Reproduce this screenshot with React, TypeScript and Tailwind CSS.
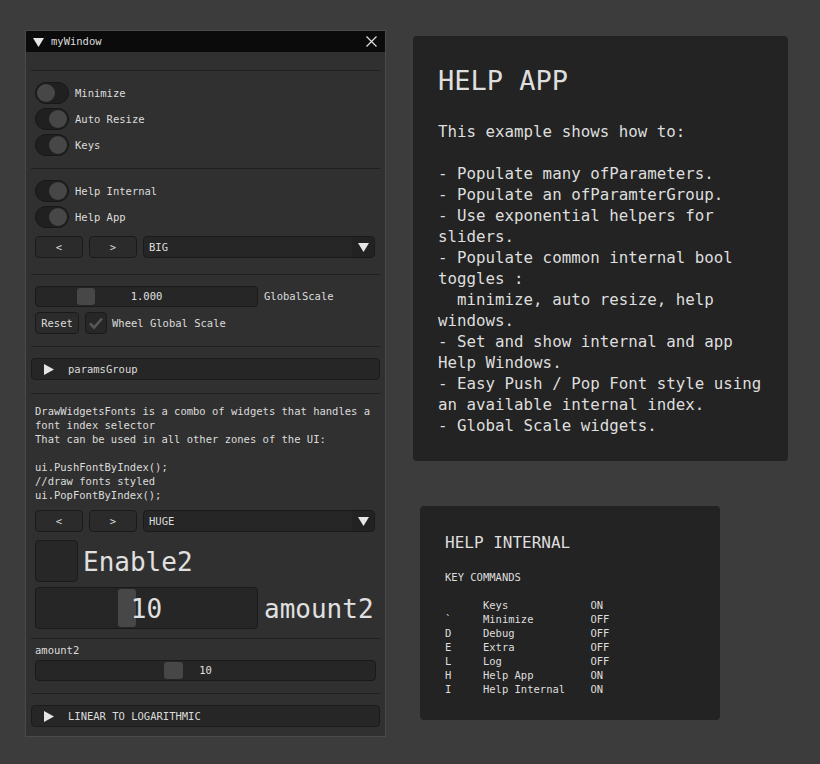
import React from "react";

const mono = { fontFamily: '"DejaVu Sans Mono", "Liberation Mono", monospace' };

function Sep() {
  return <div className="h-px bg-[#202020]" />;
}

function Toggle({ on, label, first }: { on: boolean; label: string; first?: boolean }) {
  return (
    <div className={`flex h-[22px] items-center gap-[6px] ${first ? "" : "mt-[4px]"}`}>
      <div
        className={`flex h-[22px] w-[34px] items-center rounded-full border border-[#171717] bg-[#202020] px-[1px] ${
          on ? "justify-end" : "justify-start"
        }`}
      >
        <div className="h-[18px] w-[18px] rounded-full bg-[#474747]" />
      </div>
      <span className="pt-[2px] text-[10.5px] text-[#dcdcdc]">{label}</span>
    </div>
  );
}

function DownTri({ className }: { className?: string }) {
  return (
    <svg width="11" height="10" viewBox="0 0 11 10" className={className}>
      <polygon points="0,1 11,1 5.5,10" fill="#e6e6e6" />
    </svg>
  );
}

function RightTri() {
  return (
    <svg width="10" height="11" viewBox="0 0 10 11">
      <polygon points="0,0 10,5.5 0,11" fill="#e6e6e6" />
    </svg>
  );
}

function NavRow({ value, className }: { value: string; className?: string }) {
  return (
    <div className={`flex h-[22px] items-stretch ${className ?? ""}`}>
      <div className="flex w-[48px] items-center justify-center rounded-[4px] border border-[#1a1a1a] bg-[#2b2b2b] pt-[1px] text-[10.5px] text-[#dcdcdc]">
        &lt;
      </div>
      <div className="ml-[6px] flex w-[48px] items-center justify-center rounded-[4px] border border-[#1a1a1a] bg-[#2b2b2b] pt-[1px] text-[10.5px] text-[#dcdcdc]">
        &gt;
      </div>
      <div className="ml-[6px] flex w-[232px] items-stretch overflow-hidden rounded-[4px] border border-[#1a1a1a] bg-[#262626]">
        <div className="flex flex-1 items-center pl-[5px] pt-[1px] text-[10.5px] text-[#dcdcdc]">{value}</div>
        <div className="flex w-[22px] items-center justify-center bg-[#222222]">
          <DownTri />
        </div>
      </div>
    </div>
  );
}

function Header({ label, className }: { label: string; className?: string }) {
  return (
    <div
      className={`flex h-[22px] items-center rounded-[4px] border border-[#1b1b1b] bg-[#262626] pl-[12px] ${className ?? ""}`}
    >
      <RightTri />
      <span className="ml-[14px] pt-[1px] text-[10.5px] text-[#dcdcdc]">{label}</span>
    </div>
  );
}

function Slider({
  width,
  height,
  grabLeft,
  grabWidth,
  value,
  big,
}: {
  width: number;
  height: number;
  grabLeft: number;
  grabWidth: number;
  value: string;
  big?: boolean;
}) {
  return (
    <div
      className="relative flex items-center justify-center rounded-[4px] border border-[#1a1a1a] bg-[#262626]"
      style={{ width, height }}
    >
      <div
        className="absolute rounded-[3px] bg-[#474747]"
        style={{ left: grabLeft, width: grabWidth, top: 1, bottom: 1 }}
      />
      <span className={`relative ${big ? "pt-[3px] text-[26px]" : "pt-[1px] text-[10.5px]"} text-[#e0e0e0]`}>
        {value}
      </span>
    </div>
  );
}

const helpAppLines = [
  "This example shows how to:",
  "",
  "- Populate many ofParameters.",
  "- Populate an ofParamterGroup.",
  "- Use exponential helpers for",
  "sliders.",
  "- Populate common internal bool",
  "toggles :",
  "  minimize, auto resize, help",
  "windows.",
  "- Set and show internal and app",
  "Help Windows.",
  "- Easy Push / Pop Font style using",
  "an available internal index.",
  "- Global Scale widgets.",
];

const internalLines = [
  "      Keys             ON",
  "`     Minimize         OFF",
  "D     Debug            OFF",
  "E     Extra            OFF",
  "L     Log              OFF",
  "H     Help App         ON",
  "I     Help Internal    ON",
];

export default function App() {
  return (
    <div className="flex min-h-[764px] w-[820px] items-start bg-[#3c3c3c]" style={mono}>
      {/* Window */}
      <div className="ml-[25px] mt-[30px] w-[361px] border border-[#4a4a4a] bg-[#303030]">
        <div className="flex h-[21px] items-center bg-[#0b0b0b] pl-[7px] pr-[8px]">
          <DownTri />
          <span className="ml-[7px] pt-[1px] text-[10.5px] text-[#dcdcdc]">myWindow</span>
          <svg width="11" height="11" viewBox="0 0 11 11" className="ml-auto">
            <path d="M0.5 0.5 L10.5 10.5 M10.5 0.5 L0.5 10.5" stroke="#e0e0e0" strokeWidth="1.2" />
          </svg>
        </div>
        <div className="flex flex-col px-[5px] pb-[9px]">
          <div className="mt-[18px]">
            <Sep />
          </div>
          <div className="mt-[11px] flex flex-col px-[4px]">
            <Toggle on={false} label="Minimize" first />
            <Toggle on label="Auto Resize" />
            <Toggle on label="Keys" />
          </div>
          <div className="mt-[12px]">
            <Sep />
          </div>
          <div className="mt-[11px] flex flex-col px-[4px]">
            <Toggle on label="Help Internal" first />
            <Toggle on label="Help App" />
            <NavRow value="BIG" className="mt-[8px]" />
          </div>
          <div className="mt-[16px]">
            <Sep />
          </div>
          <div className="mt-[11px] flex flex-col px-[4px]">
            <div className="flex items-center gap-[6px]">
              <Slider width={223} height={21} grabLeft={41} grabWidth={18} value="1.000" />
              <span className="pt-[1px] text-[10.5px] text-[#dcdcdc]">GlobalScale</span>
            </div>
            <div className="mt-[5px] flex h-[22px] items-center">
              <div className="flex h-[22px] w-[44px] items-center justify-center rounded-[4px] border border-[#1a1a1a] bg-[#2b2b2b] pt-[1px] text-[10.5px] text-[#dcdcdc]">
                Reset
              </div>
              <div className="ml-[6px] flex h-[22px] w-[22px] items-center justify-center rounded-[4px] border border-[#1a1a1a] bg-[#272727]">
                <svg width="16" height="14" viewBox="0 0 16 14">
                  <path d="M2 7.5 L6 11.5 L14 2.5" stroke="#575757" strokeWidth="2.6" fill="none" />
                </svg>
              </div>
              <span className="ml-[5px] pt-[1px] text-[10.5px] text-[#dcdcdc]">Wheel Global Scale</span>
            </div>
          </div>
          <div className="mt-[12px]">
            <Sep />
          </div>
          <Header label="paramsGroup" className="mt-[11px]" />
          <div className="mt-[13px]">
            <Sep />
          </div>
          <div className="mt-[10px] flex flex-col px-[4px]">
            <div className="whitespace-pre text-[10.5px] leading-[14px] text-[#dcdcdc]">
              {"DrawWidgetsFonts is a combo of widgets that handles a\nfont index selector\nThat can be used in all other zones of the UI:\n\nui.PushFontByIndex();\n//draw fonts styled\nui.PopFontByIndex();"}
            </div>
            <NavRow value="HUGE" className="mt-[8px]" />
            <div className="mt-[8px] flex h-[42px] items-center">
              <div className="h-[42px] w-[43px] rounded-[4px] border border-[#1a1a1a] bg-[#272727]" />
              <span className="ml-[5px] pt-[3px] text-[26px] text-[#e0e0e0]">Enable2</span>
            </div>
            <div className="mt-[5px] flex items-center gap-[6px]">
              <Slider width={223} height={42} grabLeft={82} grabWidth={18} value="10" big />
              <span className="pt-[3px] text-[26px] text-[#e0e0e0]">amount2</span>
            </div>
          </div>
          <div className="mt-[9px]">
            <Sep />
          </div>
          <div className="mt-[4px] flex flex-col px-[4px]">
            <div className="text-[10.5px] leading-[14px] text-[#dcdcdc]">amount2</div>
            <div className="mt-[3px]">
              <Slider width={341} height={21} grabLeft={128} grabWidth={19} value="10" />
            </div>
          </div>
          <div className="mt-[12px]">
            <Sep />
          </div>
          <Header label="LINEAR TO LOGARITHMIC" className="mt-[11px]" />
        </div>
      </div>

      {/* Right column */}
      <div className="ml-[27px] mt-[36px] flex flex-col">
        <div className="h-[425px] w-[375px] rounded-[4px] bg-[#232323] pl-[25px] pt-[29px] text-[#dedede]">
          <div className="text-[27px] leading-[32px]">HELP APP</div>
          <div className="mt-[24px] whitespace-pre text-[15.8px] leading-[21px]">
            {helpAppLines.join("\n")}
          </div>
        </div>
        <div className="ml-[7px] mt-[45px] h-[214px] w-[300px] rounded-[4px] bg-[#232323] pl-[25px] pt-[27px] text-[#dedede]">
          <div className="text-[16px] leading-[20px]">HELP INTERNAL</div>
          <div className="mt-[17px] whitespace-pre text-[10.5px] leading-[14px]">
            {"KEY COMMANDS\n\n" + internalLines.join("\n")}
          </div>
        </div>
      </div>
    </div>
  );
}
